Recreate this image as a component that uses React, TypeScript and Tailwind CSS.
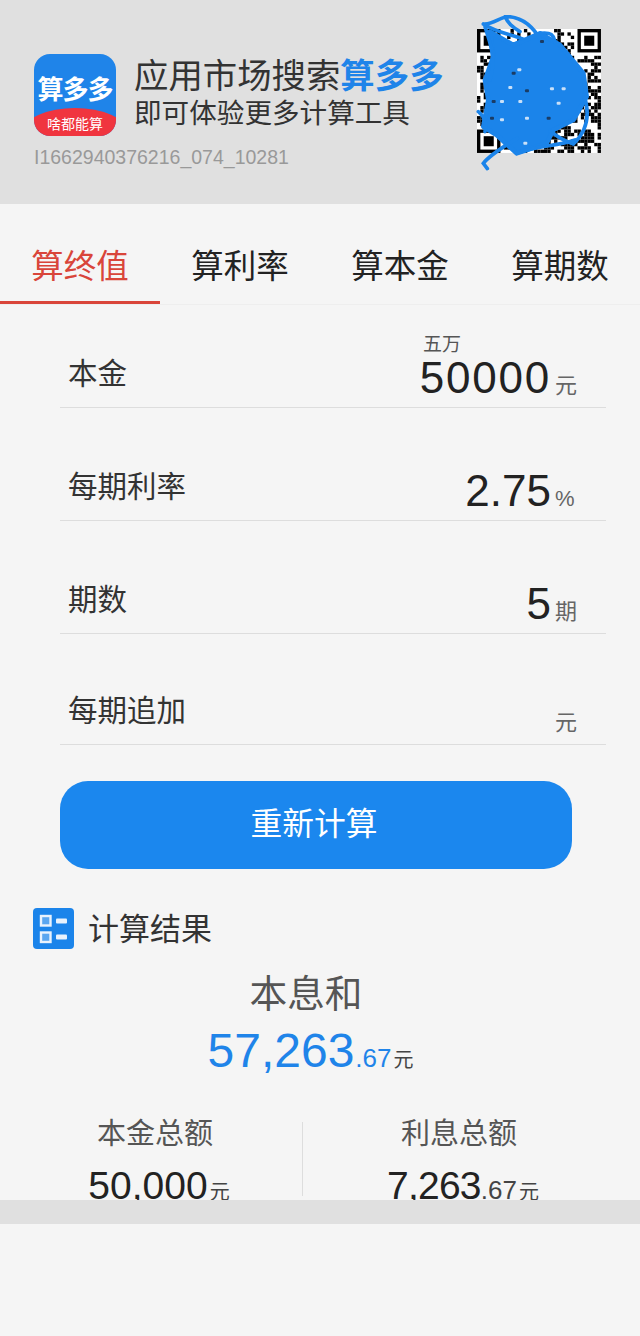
import React from "react";

const FONT = "font-['Liberation_Sans','Noto_Sans_CJK_SC',sans-serif]";

function finder(x: number, y: number) {
  return (
    <g key={`${x}-${y}`}>
      <rect x={x} y={y} width={7} height={7} fill="#000" />
      <rect x={x + 1} y={y + 1} width={5} height={5} fill="#fff" />
      <rect x={x + 2} y={y + 2} width={3} height={3} fill="#000" />
    </g>
  );
}

function QR() {
  const n = 37;
  const cells: React.ReactNode[] = [];
  let seed = 1337;
  for (let y = 0; y < n; y++) {
    for (let x = 0; x < n; x++) {
      seed = (seed * 1103515245 + 12345) & 0x7fffffff;
      const inFinder = (x < 8 && y < 8) || (x > 28 && y < 8) || (x < 8 && y > 28);
      if (!inFinder && (seed >> 16) % 100 < 50) {
        cells.push(<rect key={`${x}_${y}`} x={x} y={y} width={1} height={1} fill="#000" />);
      }
    }
  }
  const specks = [
    [215, 215], [232, 205], [205, 258], [255, 268], [330, 262], [365, 262], [155, 300], [180, 300],
    [235, 300], [150, 350], [255, 350], [350, 305], [320, 350], [250, 425], [180, 355], [300, 120],
  ];
  return (
    <svg width="140" height="158" viewBox="0 0 140 158" className="block">
      <g transform="translate(8 14) scale(3.35)">
        <rect width={37} height={37} fill="#fff" />
        {cells}
        {finder(0, 0)}
        {finder(30, 0)}
        {finder(0, 30)}
      </g>
      <g transform="translate(-29 -15) scale(0.3333)">
        <path
          d="M150 95 L220 135 L300 100 L360 135 L430 220 L440 290 L400 360 L340 390 L320 430 L260 450 L230 460 L170 405 L130 380 L145 300 L135 240 L160 170 Z"
          fill="#1b84ea"
          stroke="#1b84ea"
          strokeWidth="14"
          strokeLinejoin="round"
        />
        <path
          d="M130 72 C160 75 180 50 205 50 C240 52 275 70 305 125 M130 72 C165 95 200 100 250 118 M195 50 C205 70 215 80 240 95 M135 80 C150 130 170 170 150 240 M232 415 C190 440 150 465 130 490 L142 506 M432 285 C450 340 445 390 400 432 C380 425 350 410 330 392 M230 460 C290 435 350 440 405 420 M115 335 C135 350 140 375 135 395 M300 100 C340 95 340 110 345 125"
          fill="none"
          stroke="#1b84ea"
          strokeWidth="11"
          strokeLinecap="round"
        />
        {specks.map(([x, y], i) => (
          <rect key={i} x={x} y={y} width={12} height={9} rx={3} fill={i % 3 === 0 ? "#1a3c66" : "#c9e0f8"} />
        ))}
      </g>
    </svg>
  );
}

function Row({
  label,
  value,
  unit,
  hint,
  rowClass,
  valueClass,
}: {
  label: string;
  value?: string;
  unit: string;
  hint?: string;
  rowClass: string;
  valueClass?: string;
}) {
  return (
    <div
      className={`relative ml-[60px] w-[546px] border-b border-[#dddddd] flex items-end justify-between pl-2 pr-[28px] shrink-0 ${rowClass}`}
    >
      <span className="text-[29.5px] leading-[36px] text-[#333333] mb-[15px]">{label}</span>
      <span className="flex items-baseline mb-[6px]">
        <span className={`text-[44px] leading-[44px] text-[#222222] ${valueClass ?? ""}`}>{value}</span>
        <span className="text-[22px] leading-[30px] text-[#666666] ml-[4px] w-[23px]">{unit}</span>
      </span>
      {hint && (
        <span className="absolute right-[145px] bottom-[52px] text-[19px] leading-[20px] text-[#555555]">{hint}</span>
      )}
    </div>
  );
}

function Stat({ label, value, cents, valueClass }: { label: string; value: string; cents?: string; valueClass?: string }) {
  return (
    <div className="flex-1 flex flex-col items-center">
      <span className="text-[29px] leading-[36px] text-[#555555]">{label}</span>
      <span className="flex items-baseline mt-[9px] ml-[8px]">
        <span className={`text-[39px] leading-[50px] text-[#222222] ${valueClass ?? ""}`}>{value}</span>
        {cents && <span className="text-[26px] leading-[30px] text-[#444444]">{cents}</span>}
        <span className="text-[20px] leading-[24px] text-[#444444] ml-[2px]">元</span>
      </span>
    </div>
  );
}

export default function App() {
  return (
    <div className={`${FONT} w-[640px] h-[1336px] bg-[#f5f5f5] flex flex-col overflow-hidden`}>
      <header className="h-[204px] shrink-0 bg-[#e0e0e0] flex items-start">
        <div className="ml-[34px] mt-[54px] w-[82px]">
          <div className="relative w-[82px] h-[82px] rounded-[16px] bg-[#1f84e9] overflow-hidden">
            <div className="absolute inset-x-0 top-[21px] text-center text-[26px] leading-[30px] font-bold text-white tracking-[-1px] whitespace-nowrap">
              算多多
            </div>
            <div className="absolute left-[-10px] right-[-10px] bottom-[-18px] h-[46px] rounded-[50%] bg-[#f0353f] pt-[7px] text-center text-[14px] leading-[18px] text-white">
              啥都能算
            </div>
          </div>
          <div className="mt-[9px] text-[19.5px] leading-[24px] text-[#999999] whitespace-nowrap">I1662940376216_074_10281</div>
        </div>
        <div className="ml-[18px] mt-[55px] w-[320px]">
          <div className="text-[34.4px] leading-[42px] text-[#333333] whitespace-nowrap">
            应用市场搜索<span className="text-[#1f84e9] font-bold">算多多</span>
          </div>
          <div className="text-[27.6px] leading-[34px] text-[#333333] whitespace-nowrap">即可体验更多计算工具</div>
        </div>
        <div className="ml-[15px] mt-[15px] shrink-0">
          <QR />
        </div>
      </header>

      <nav className="h-[101px] shrink-0 grid grid-cols-4 border-b border-[#eeeeee]">
        {["算终值", "算利率", "算本金", "算期数"].map((t, i) => (
          <div
            key={t}
            className={
              i === 0
                ? "flex items-center justify-center text-[32.5px] text-[#d9453a] border-b-[3px] border-[#d9453a] pt-[36px] pb-[6px]"
                : "flex items-center justify-center text-[32.5px] text-[#222222] border-b-[3px] border-transparent pt-[36px] pb-[6px]"
            }
          >
            {t}
          </div>
        ))}
      </nav>

      <div className="flex flex-col">
        <Row rowClass="h-[103px]" label="本金" value="50000" unit="元" hint="五万" valueClass="tracking-[1.8px]" />
        <Row rowClass="h-[113px]" label="每期利率" value="2.75" unit="%" />
        <Row rowClass="h-[113px]" label="期数" value="5" unit="期" />
        <Row rowClass="h-[111px]" label="每期追加" unit="元" />
      </div>

      <button className="ml-[60px] mt-[36px] w-[512px] h-[88px] shrink-0 rounded-[28px] bg-[#1b87ee] text-white text-[31.75px] pr-[4px]">
        重新计算
      </button>

      <div className="ml-[33px] mt-[39px] flex items-center gap-[14px] shrink-0">
        <svg width="41" height="41" viewBox="0 0 41 41">
          <rect width="41" height="41" rx="4" fill="#1b84ea" />
          <rect x="8" y="8" width="9.5" height="9.5" fill="#5aa6f0" stroke="#e8f2fd" strokeWidth="2.4" />
          <rect x="8" y="24.5" width="9.5" height="9.5" fill="#5aa6f0" stroke="#e8f2fd" strokeWidth="2.4" />
          <rect x="23" y="10.5" width="11" height="5" rx="1" fill="#e8f2fd" />
          <rect x="23" y="26.5" width="11" height="5" rx="1" fill="#e8f2fd" />
        </svg>
        <span className="text-[31px] leading-[40px] text-[#333333] relative top-[1px]">计算结果</span>
      </div>

      <div className="w-[612px] flex flex-col items-center shrink-0 mt-[22px]">
        <span className="text-[37.7px] leading-[46px] text-[#555555]">本息和</span>
        <span className="flex items-baseline mt-[6px] ml-[9px]">
          <span className="text-[48px] leading-[56px] text-[#1f84e9]">57,263</span>
          <span className="text-[26px] leading-[30px] text-[#1f84e9] ml-[1px]">.67</span>
          <span className="text-[20px] leading-[24px] text-[#444444] ml-[2px]">元</span>
        </span>
      </div>

      <div className="relative h-[84px] shrink-0 overflow-hidden mt-[37px] flex">
        <div className="ml-[10px] w-[290px] flex">
          <Stat label="本金总额" value="50,000" />
        </div>
        <div className="w-px h-[74px] mt-[6px] bg-[#dddddd] ml-[2px] shrink-0" />
        <div className="ml-[1px] w-[310px] flex">
          <Stat label="利息总额" value="7,263" cents=".67" valueClass="tracking-[-0.8px]" />
        </div>
      </div>
      <div className="h-[24px] shrink-0 bg-[#e0e0e0]" />
    </div>
  );
}
